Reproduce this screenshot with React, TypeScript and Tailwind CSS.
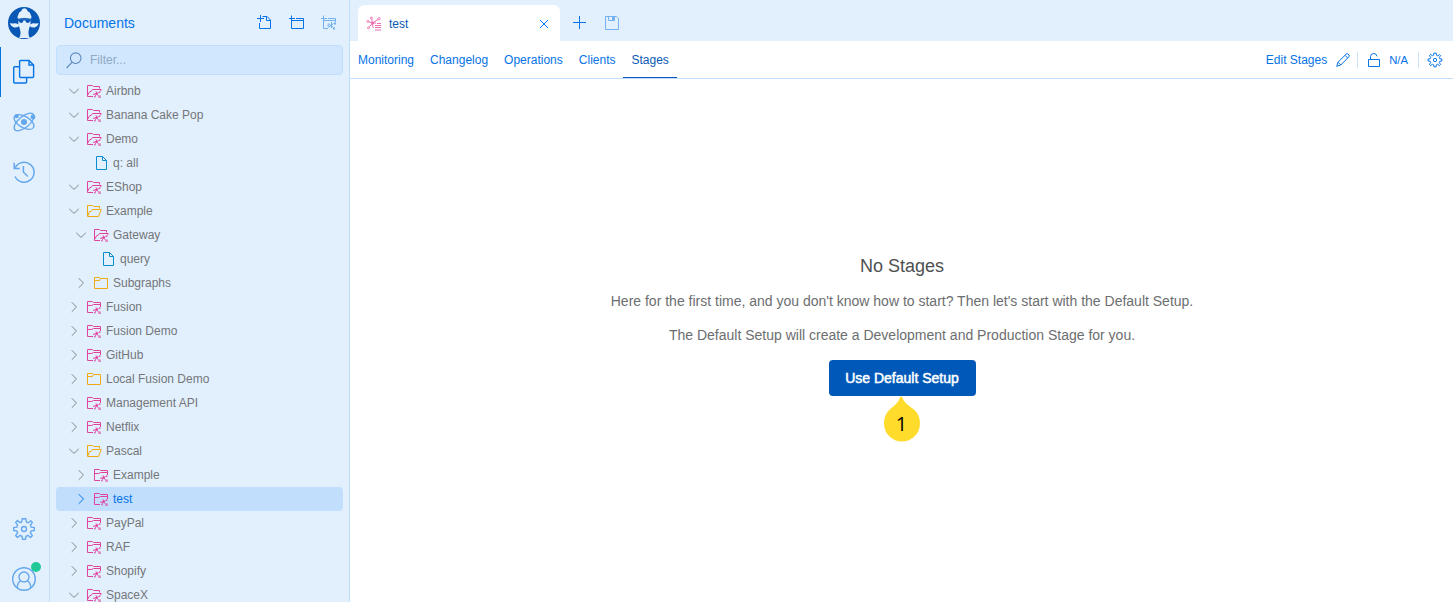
import type { ReactNode } from "react";

type IconProps = { className?: string };

function Svg({ box, className, children, sw = 1 }: { box: string; className?: string; children: ReactNode; sw?: number }) {
  return (
    <svg viewBox={box} className={className} fill="none" stroke="currentColor" strokeWidth={sw} aria-hidden="true">
      {children}
    </svg>
  );
}

function Logo() {
  return (
    <svg viewBox="0 0 32 32" className="size-8" aria-hidden="true">
      <circle cx="16" cy="16" r="16" fill="#0958b5" />
      <path
        d="M9.8 11.8Q9 9.4 10.4 7.6Q10.6 4.8 13 4.2Q14 1.4 16.4 1.2Q18.8 1.4 19.8 4.2Q22.2 4.8 22.6 7.6Q24 9.4 23.2 11.8Q16.5 10.4 9.8 11.8Z"
        fill="#e2f0fe"
      />
      <path
        d="M10.2 12.5H22.6L22.4 17.5Q24.8 15.8 27.6 16.6L30.8 16.2Q29.8 19.6 26.6 20.4Q23.8 20.6 21.8 19.2Q20.6 22.4 20.4 25.4Q20.4 28.6 22 31L11 31Q12.6 28.6 12.6 25.4Q12.2 22.4 11 19.2Q9 20.6 6.2 20.4Q3 19.6 1.6 16.2L5 16.6Q7.8 15.8 10.4 17.5Z"
        fill="#e2f0fe"
      />
      <path d="M10 12.3H22.8V13.4L21.8 14.6Q21 16.2 19.4 16Q17.8 15.8 17.3 13.6H15.5Q15 15.8 13.4 16Q11.8 16.2 11 14.6L10 13.4Z" fill="#0958b5" />
    </svg>
  );
}

function DocumentsIcon({ className }: IconProps) {
  return (
    <Svg box="0 0 24 26" className={className} sw={1.4}>
      <path d="M7.5 7.7H2.6Q1.7 7.7 1.7 8.6V23Q1.7 24 2.6 24H13.6Q14.6 24 14.6 23V18.6" />
      <path d="M8.5 1.5H17L21.6 6V17.5Q21.6 18.5 20.6 18.5H8.6Q7.6 18.5 7.6 17.5V2.4Q7.6 1.5 8.5 1.5Z" />
      <path d="M17 1.5V6H21.6" />
    </Svg>
  );
}

function AtomIcon({ className }: IconProps) {
  return (
    <Svg box="0 0 24 24" className={className} sw={1.3}>
      <ellipse cx="12" cy="12" rx="12" ry="5.6" transform="rotate(-40 12 12)" />
      <ellipse cx="12" cy="12" rx="11" ry="5.6" transform="rotate(30 12 12)" />
      <g fill="currentColor" stroke="none">
        <circle cx="12" cy="12" r="3" />
        <circle cx="4.6" cy="6.2" r="2.1" />
        <circle cx="21" cy="7" r="2.4" />
      </g>
    </Svg>
  );
}

function HistoryIcon({ className }: IconProps) {
  return (
    <Svg box="0 0 24 24" className={className} sw={1.5}>
      <path d="M3 16.5A10 10 0 1 0 3.2 7.6" />
      <path d="M2.2 2.8V8.5H7.8M11.4 6V12L15.8 16.5" />
    </Svg>
  );
}

function GearIcon({ className, sw = 1.4 }: IconProps & { sw?: number }) {
  return (
    <Svg box="0 0 24 24" className={className} sw={sw}>
      <path
        strokeLinejoin="round"
        d="M10.2 1.7H13.8L14.3 5Q15.4 5.3 16.3 5.8L18.8 3.8L20.4 5.4L18.4 8.1Q18.9 9 19.1 10.1L22.3 10.5V13.5L19.1 13.9Q18.9 15 18.4 15.9L20.4 18.6L18.6 20.4L15.9 18.4Q15 18.9 14 19.1L13.5 22.3H10.5L10 19.1Q9 18.9 8.1 18.4L5.4 20.4L3.6 18.6L5.6 15.9Q5.1 15 4.9 13.9L1.7 13.5V10.5L4.9 10.1Q5.1 9 5.6 8.1L3.6 5.4L5.4 3.6L8.1 5.6Q9 5.1 9.7 5Z"
      />
      <circle cx="12" cy="12" r="2.5" />
    </Svg>
  );
}

function UserIcon({ className }: IconProps) {
  return (
    <Svg box="0 0 24 24" className={className} sw={1.4}>
      <circle cx="12" cy="12" r="11.3" />
      <circle cx="12" cy="10" r="5" />
      <path d="M5.2 20.8C5.3 17.3 6.6 14.7 9 13.9M18.8 20.8C18.7 17.3 17.4 14.7 15 13.9" />
    </Svg>
  );
}

function NewFileIcon({ className }: IconProps) {
  return (
    <Svg box="0 0 14 15" className={className}>
      <path d="M0 3.5H7M3.5 0V7M2.5 8V13.5H13.5V5L10 1.5H5.5M9.5 1.5V5.5H13.5" />
    </Svg>
  );
}

function NewFolderIcon({ className }: IconProps) {
  return (
    <Svg box="0 0 15 15" className={className}>
      <path d="M0 3.5H6M2.5 0.5V13.5H14.5V3.5H7M2.5 5.5H14.5" />
    </Svg>
  );
}

function NewApiIcon({ className }: IconProps) {
  return (
    <Svg box="0 0 15 15" className={className}>
      <path d="M0 3.5H6M2.5 0.5V13.5H7M14.5 7V3.5H7M2.5 5.5H14.5" />
      <path d="M7.5 8.5L12.5 12.5M12.5 8.5L7.5 12.5M10.5 7V13" />
      <path d="M6.5 10.5H8M13 8.5H15M12 13.5H14" strokeWidth="1.8" />
    </Svg>
  );
}

function SearchIcon({ className }: IconProps) {
  return (
    <Svg box="0 0 16 17" className={className} sw={1.1}>
      <circle cx="9.7" cy="6.2" r="5.3" />
      <path d="M6.2 10.2L0.6 16" />
    </Svg>
  );
}

function Chevron({ open, selected }: { open: boolean; selected: boolean }) {
  return (
    <Svg box="0 0 12 12" className={`size-3 shrink-0 ${selected ? "" : "text-[#85888c]"}`} sw={1}>
      {open ? <path d="M1.2 3.8L6 8.4L10.8 3.8" /> : <path d="M3.7 1.2L8.5 6L3.7 10.8" />}
    </Svg>
  );
}

type Kind = "api" | "folder" | "file";

function FolderShape({ open }: { open: boolean }) {
  return open ? (
    <path d="M12.5 4.5V2.5H6.5L5.5 1.5H0.5V12.5H11.5L14.2 5.5H5.5L4 7.5H2.5L0.8 12" />
  ) : (
    <path d="M0.5 1.5H5.5L6.5 2.5H13.5V12.5H0.5ZM0.5 4.5H5.5L6.5 2.5" />
  );
}

function ApiFolderIcon({ open }: { open: boolean }) {
  return (
    <Svg box="0 0 15 14" className="h-[14px] w-[15px] shrink-0 text-[#e0439d]">
      {open ? (
        <path d="M6 12.5H0.5V1.5H5.5L6.5 2.5H12.5V4.5M0.8 11L2.8 7.5H4L5.5 5.5H14.2L13.8 7" />
      ) : (
        <path d="M6 12.5H0.5V1.5H5.5L6.5 2.5H13.5V7M0.5 5.5H4.5L6.5 4.5H13.5" />
      )}
      <path d="M7 10.2L9.7 9.6L12.5 8.2M9 7.2L9.7 9.6L8 12.4M9.7 9.6L11.5 12.2" strokeWidth="0.8" />
      <g fill="currentColor" stroke="none">
        <circle cx="9.7" cy="9.6" r="1.2" />
        <circle cx="12.8" cy="8.1" r="0.8" />
        <circle cx="6.9" cy="10.2" r="0.7" />
        <circle cx="8" cy="12.7" r="0.8" />
        <rect x="11.3" y="11.4" width="2.6" height="2.6" opacity="0.6" />
      </g>
    </Svg>
  );
}

function NodeIcon({ kind, open }: { kind: Kind; open: boolean }) {
  if (kind === "api") return <ApiFolderIcon open={open} />;
  if (kind === "folder")
    return (
      <Svg box="0 0 15 14" className="h-[14px] w-[15px] shrink-0 text-[#efaa14]">
        <FolderShape open={open} />
      </Svg>
    );
  return (
    <Svg box="0 0 11 14" className="ml-px h-[14px] w-[11px] shrink-0 text-[#078ed0]">
      <path d="M0.5 0.5H6.5L10.5 4.5V13.5H0.5ZM6.5 0.5V4.5H10.5" />
    </Svg>
  );
}

type Node = { label: string; kind: Kind; open?: boolean; level?: 0 | 1 | 2; selected?: boolean };

const nodes: Node[] = [
  { label: "Airbnb", kind: "api", open: true },
  { label: "Banana Cake Pop", kind: "api", open: true },
  { label: "Demo", kind: "api", open: true },
  { label: "q: all", kind: "file", level: 1 },
  { label: "EShop", kind: "api", open: true },
  { label: "Example", kind: "folder", open: true },
  { label: "Gateway", kind: "api", open: true, level: 1 },
  { label: "query", kind: "file", level: 2 },
  { label: "Subgraphs", kind: "folder", level: 1 },
  { label: "Fusion", kind: "api" },
  { label: "Fusion Demo", kind: "api" },
  { label: "GitHub", kind: "api" },
  { label: "Local Fusion Demo", kind: "folder" },
  { label: "Management API", kind: "api" },
  { label: "Netflix", kind: "api" },
  { label: "Pascal", kind: "folder", open: true },
  { label: "Example", kind: "api", level: 1 },
  { label: "test", kind: "api", level: 1, selected: true },
  { label: "PayPal", kind: "api" },
  { label: "RAF", kind: "api" },
  { label: "Shopify", kind: "api" },
  { label: "SpaceX", kind: "api", open: true },
];

const indents = ["pl-3", "pl-[19px]", "pl-[26px]"];

function TreeRow({ label, kind, open = false, level = 0, selected = false }: Node) {
  return (
    <div
      className={`flex h-6 shrink-0 items-center rounded ${indents[level]} ${
        selected ? "bg-[#c1defd] text-[#0673e6]" : "text-[#747679]"
      }`}
    >
      {kind === "file" ? <span className="w-3 shrink-0" /> : <Chevron open={open} selected={selected} />}
      <span className={`flex w-[19px] shrink-0 ${kind === "file" ? "ml-2" : "ml-[7px]"}`}>
        <NodeIcon kind={kind} open={open} />
      </span>
      <span className={kind === "file" ? "-ml-px" : ""}>{label}</span>
    </div>
  );
}

function ActivityBar() {
  return (
    <nav className="flex w-[50px] shrink-0 flex-col border-r border-[#bfdffd] bg-[#e2f0fe] text-[#65a7ec]">
      <div className="flex h-[47px] justify-center pt-[7px] pr-px">
        <Logo />
      </div>
      <div className="flex h-[50px] items-center justify-center border-l border-[#0673e6] pr-0.5 text-[#0673e6]">
        <DocumentsIcon className="h-[26px] w-6" />
      </div>
      <div className="flex h-[50px] items-center justify-center pr-px">
        <AtomIcon className="size-6" />
      </div>
      <div className="flex h-[50px] items-center justify-center pr-px">
        <HistoryIcon className="size-6" />
      </div>
      <div className="mt-auto flex h-[50px] items-center justify-center pr-px">
        <GearIcon className="size-6" />
      </div>
      <div className="mb-[-2px] flex h-[50px] items-center justify-center pr-px">
        <div className="relative">
          <UserIcon className="size-6" />
          <span className="absolute -top-[5px] left-[19px] size-2.5 rounded-full bg-[#20c997]" />
        </div>
      </div>
    </nav>
  );
}

function DocumentsPanel() {
  return (
    <aside className="flex w-[300px] shrink-0 flex-col overflow-hidden border-r border-[#bfdffd] bg-[#e2f0fe] px-1.5">
      <header className="flex h-[45px] shrink-0 items-center pr-[7px] pl-2 text-[#0673e6]">
        <h2 className="mr-auto text-sm">Documents</h2>
        <NewFileIcon className="mr-[18px] h-[15px] w-[14px]" />
        <NewFolderIcon className="mr-[17px] size-[15px]" />
        <NewApiIcon className="size-[15px] opacity-50" />
      </header>
      <div className="flex h-[30px] shrink-0 items-center gap-2 rounded border border-[#bfdffd] bg-[#d1e7fe] pl-[9px]">
        <SearchIcon className="h-[17px] w-4 text-[#5b87b8]" />
        <input className="w-48 bg-transparent text-xs outline-none placeholder:text-[#8fa9c4]" placeholder="Filter..." />
      </div>
      <div className="mt-1 flex flex-col text-xs">
        {nodes.map((n, i) => (
          <TreeRow key={i} {...n} />
        ))}
      </div>
    </aside>
  );
}

function TabBar() {
  return (
    <div className="flex h-[41px] shrink-0 items-end bg-[#e2f0fe] pl-2 text-[#0673e6]">
      <div className="flex h-9 w-[202px] items-center rounded-t-md bg-white pt-px pr-[11px] pl-2">
        <Svg box="0 0 16 16" className="size-4 text-[#ea6fb1]" sw={1}>
          <path d="M2 5.5L6.5 7L12.3 3.2M6.5 7L3 11.4M6.5 7L7 12M5.5 2.5L6.5 7L10 7" />
          <g fill="#fff" strokeWidth="0.9">
            <circle cx="1.9" cy="5.4" r="1" />
            <circle cx="5.4" cy="2" r="1" />
            <circle cx="13" cy="2.8" r="1.2" />
            <circle cx="2.5" cy="11.8" r="1" />
          </g>
          <circle cx="6.6" cy="7" r="1.5" fill="currentColor" stroke="none" />
          <path d="M11 7.5H15M9 9.5H15M9 11.5H15M9 14H15" strokeWidth="1.2" />
        </Svg>
        <span className="mt-px mr-auto ml-[7px] text-xs text-[#0958b5]">test</span>
        <Svg box="0 0 10 10" className="size-2.5" sw={1}>
          <path d="M1 1L9 9M9 1L1 9" />
        </Svg>
      </div>
      <div className="flex h-9 items-center pl-[13px]">
        <Svg box="0 0 13 13" className="mb-px size-[13px]" sw={1}>
          <path d="M0 6.5H13M6.5 0V13" />
        </Svg>
        <Svg box="0 0 14 14" className="ml-[19px] size-[14px] opacity-50" sw={1}>
          <path d="M0.5 0.5H11.5L13.5 2.5V13.5H0.5ZM3.5 0.5V4.5H9.5V0.5" />
          <path d="M7 1V4H9V1Z" fill="currentColor" stroke="none" />
        </Svg>
      </div>
    </div>
  );
}

const links = ["Monitoring", "Changelog", "Operations", "Clients", "Stages"];

function Toolbar() {
  return (
    <div className="flex h-[38px] shrink-0 items-stretch border-b border-[#bfdffd] text-xs text-[#0673e6]">
      {links.map((l) => (
        <a
          key={l}
          className={`flex items-center px-2 ${l === "Stages" ? "border-b border-[#0958b5] pt-px text-[#0958b5]" : ""}`}
        >
          {l}
        </a>
      ))}
      <div className="ml-auto flex items-center pr-2.5">
        <span>Edit Stages</span>
        <Svg box="0 0 14 14" className="ml-[9px] size-[14px]" sw={1}>
          <path d="M0.7 13.3L2 9.2L10.2 1.1Q11 0.3 12 1L13 2Q13.7 3 12.9 3.8L4.8 12L0.7 13.3ZM9 2.3L11.7 5M2 9.2L4.8 12" />
        </Svg>
        <span className="ml-[7px] h-4 w-px bg-[#cfe5fc]" />
        <Svg box="0 0 12 14" className="ml-2.5 h-[14px] w-3" sw={1}>
          <path d="M0.5 6.5H11.5V13.5H0.5ZM2.5 6.5V3.5Q2.7 0.5 5.7 0.5Q8.5 0.5 8.9 3.3" />
        </Svg>
        <span className="mt-0.5 ml-[9px] text-[11.3px]">N/A</span>
        <span className="ml-2.5 h-4 w-px bg-[#cfe5fc]" />
        <GearIcon className="ml-2 size-4" sw={1.5} />
      </div>
    </div>
  );
}

function EmptyStages() {
  return (
    <section className="flex flex-1 flex-col items-center pt-[175px] pl-px text-sm text-[#6c6e70]">
      <h1 className="text-lg leading-6 text-[#4e5052]">No Stages</h1>
      <p className="mt-[13px] leading-5">
        Here for the first time, and you don't know how to start? Then let's start with the Default Setup.
      </p>
      <p className="mt-3.5 leading-5">The Default Setup will create a Development and Production Stage for you.</p>
      <div className="relative mt-[15px]">
        <button className="h-9 w-[147px] rounded bg-[#0059b8] text-sm text-white [-webkit-text-stroke:0.5px_white]">
          Use Default Setup
        </button>
        <div className="absolute top-9 left-[55px] h-[46px] w-9">
          <svg viewBox="0 0 36 46" className="h-[46px] w-9" aria-hidden="true">
            <path
              d="M16.2 1Q17.2 0 18.2 1C19.7 6 23.5 8.8 28.5 12.4C33.5 15.8 36 21 36 27.5A18 18 0 0 1 0 27.5C0 21 2.5 15.8 7 12.4C11.5 8.8 14.7 6 16.2 1Z"
              fill="#ffdb2b"
            />
          </svg>
          <span className="absolute inset-x-0 top-[14px] text-center font-['Open_Sans',sans-serif] text-xl leading-7 text-black">1</span>
        </div>
      </div>
    </section>
  );
}

export default function App() {
  return (
    <div className="flex h-screen w-full overflow-hidden bg-white font-['Liberation_Sans',Arial,sans-serif]">
      <ActivityBar />
      <DocumentsPanel />
      <main className="flex min-w-0 flex-1 flex-col">
        <TabBar />
        <Toolbar />
        <EmptyStages />
      </main>
    </div>
  );
}
